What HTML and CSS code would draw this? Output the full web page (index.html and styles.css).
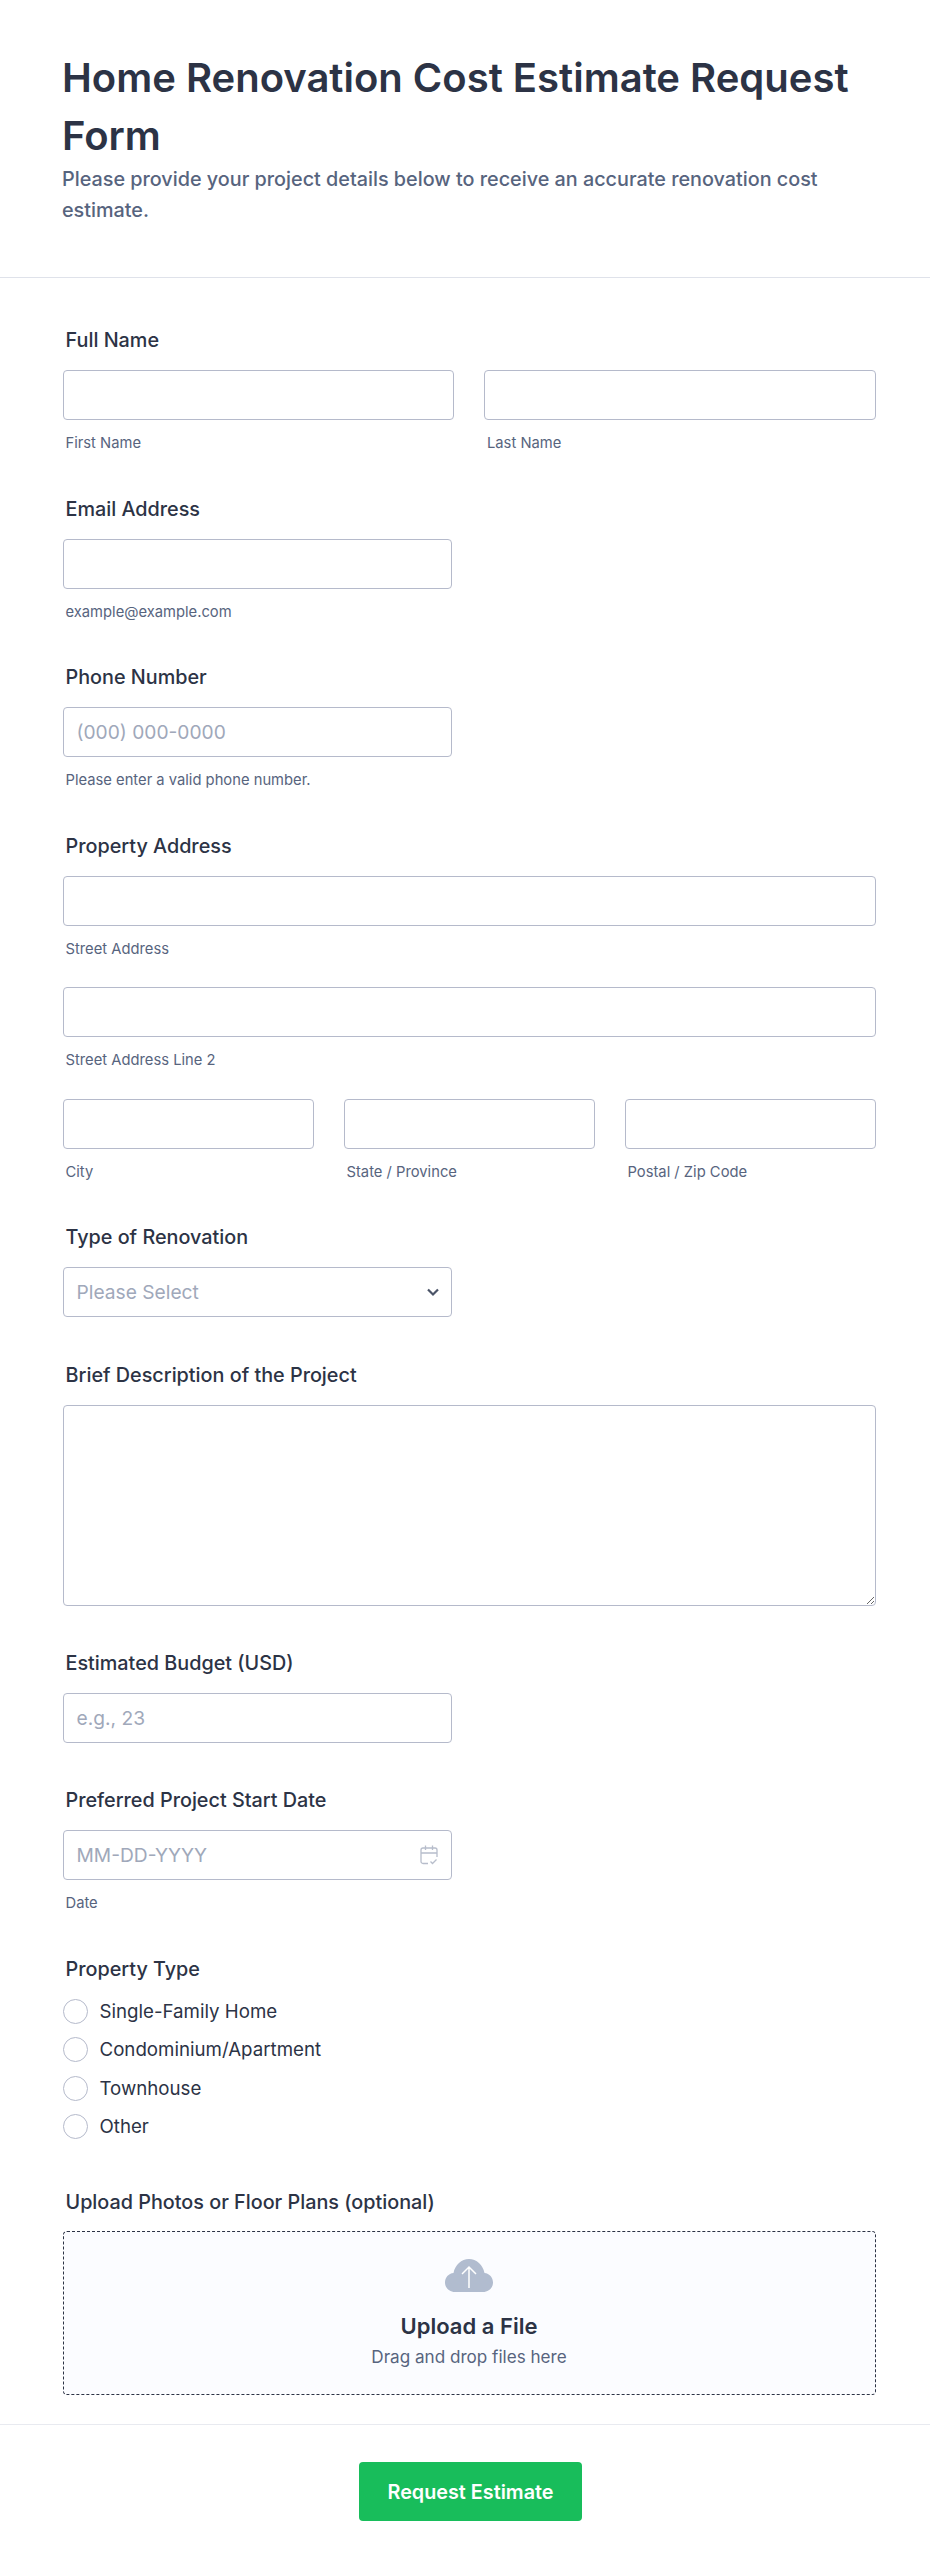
FILE: index.html
```html
<!DOCTYPE html>
<html>
<head>
    <title>Home Renovation Cost Estimate Request Form</title>
    <link rel="stylesheet" href="styles.css">
</head>
<body>
    <div class="form-header">
        <h1>Home Renovation Cost Estimate Request Form</h1>
        <p>Please provide your project details below to receive an accurate renovation cost estimate.</p>
    </div>

    <form class="form-body">
        <div class="field">
            <label class="field-label">Full Name</label>
            <div class="row row-2">
                <div>
                    <input type="text" class="text-input">
                    <span class="sub-label">First Name</span>
                </div>
                <div>
                    <input type="text" class="text-input">
                    <span class="sub-label">Last Name</span>
                </div>
            </div>
        </div>

        <div class="field field-half">
            <label class="field-label">Email Address</label>
            <input type="text" class="text-input">
            <span class="sub-label">example@example.com</span>
        </div>

        <div class="field field-half">
            <label class="field-label">Phone Number</label>
            <input type="text" class="text-input" placeholder="(000) 000-0000">
            <span class="sub-label">Please enter a valid phone number.</span>
        </div>

        <div class="field">
            <label class="field-label">Property Address</label>
            <div class="address-line">
                <input type="text" class="text-input">
                <span class="sub-label">Street Address</span>
            </div>
            <div class="address-line">
                <input type="text" class="text-input">
                <span class="sub-label">Street Address Line 2</span>
            </div>
            <div class="row row-3">
                <div>
                    <input type="text" class="text-input">
                    <span class="sub-label">City</span>
                </div>
                <div>
                    <input type="text" class="text-input">
                    <span class="sub-label">State / Province</span>
                </div>
                <div>
                    <input type="text" class="text-input">
                    <span class="sub-label">Postal / Zip Code</span>
                </div>
            </div>
        </div>

        <div class="field field-half">
            <label class="field-label">Type of Renovation</label>
            <div class="input-wrap">
                <select class="text-input select-input">
                    <option>Please Select</option>
                </select>
                <svg class="input-icon chevron" width="14" height="10" viewBox="0 0 14 10"><path d="M2 2.500l5 5 5-5" fill="none" stroke="#4b5468" stroke-width="2.200"/></svg>
            </div>
        </div>

        <div class="field">
            <label class="field-label">Brief Description of the Project</label>
            <textarea class="text-input text-area"></textarea>
        </div>

        <div class="field field-half field-tight">
            <label class="field-label">Estimated Budget (USD)</label>
            <input type="text" class="text-input" placeholder="e.g., 23">
        </div>

        <div class="field field-half field-tight">
            <label class="field-label">Preferred Project Start Date</label>
            <div class="input-wrap">
                <input type="text" class="text-input" placeholder="MM-DD-YYYY">
                <svg class="input-icon calendar" width="18" height="20" viewBox="0 0 18 20" fill="none" stroke="#b7bdcb" stroke-width="1.300"><path d="M8 18.500H3a2 2 0 0 1-2-2V5a2 2 0 0 1 2-2h12a2 2 0 0 1 2 2v7"/><path d="M1 8h16M5.500 .5v4.500M12.500 .5v4.500M10.500 16.500l2 2 4-4"/></svg>
            </div>
            <span class="sub-label">Date</span>
        </div>

        <div class="field">
            <label class="field-label">Property Type</label>
            <div class="radio-list">
                <label class="radio-item"><input type="radio" name="ptype"> Single-Family Home</label>
                <label class="radio-item"><input type="radio" name="ptype"> Condominium/Apartment</label>
                <label class="radio-item"><input type="radio" name="ptype"> Townhouse</label>
                <label class="radio-item"><input type="radio" name="ptype"> Other</label>
            </div>
        </div>

        <div class="field field-upload">
            <label class="field-label">Upload Photos or Floor Plans (optional)</label>
            <div class="upload-box">
                <svg class="cloud" width="48" height="33" viewBox="0 0 48 33"><path d="M10 33C4.500 33 0 29 0 23.500 0 18.500 3.500 14.500 8.500 14 10 6 16.500 0 24 0s14 6 15.500 14C44.500 14.500 48 18.500 48 23.500 48 29 43.500 33 38 33z" fill="#b1bccf"/><path d="M24 29V8.500M17 15l7-7 7 7" fill="none" stroke="#fff" stroke-width="1.500"/></svg>
                <div class="upload-title">Upload a File</div>
                <div class="upload-hint">Drag and drop files here</div>
            </div>
        </div>
    </form>

    <div class="form-footer">
        <button type="button" class="submit-btn">Request Estimate</button>
    </div>
</body>
</html>
```

FILE: styles.css
```css
* {
    box-sizing: border-box;
}
body {
    font-family: Inter, "Liberation Sans", sans-serif;
    background-color: #fff;
    color: #2c3345;
    margin: 0;
    padding: 0;
}
.form-header {
    height: 278px;
    padding: 49px 54px 0 62px;
    border-bottom: 1px solid #dfe2ea;
}
.form-header h1 {
    font-size: 40px;
    font-weight: 600;
    line-height: 57.500px;
    margin: 0;
}
.form-header p {
    font-size: 19.800px;
    font-weight: 500;
    line-height: 31px;
    color: #57647e;
    margin: 0;
}
.form-body {
    padding: 52px 54.500px 0 62.500px;
}
.field {
    margin-bottom: 47.500px;
}
.field-half {
    width: 389px;
}
.field-label {
    display: block;
    font-size: 19.800px;
    font-weight: 500;
    line-height: 21px;
    margin: 0 0 19px 3px;
}
.field-tight .field-label {
    margin-bottom: 18.800px;
}
.field-upload {
    margin-top: 53.400px;
    margin-bottom: 0;
}
.field-upload .field-label {
    margin-bottom: 17.500px;
}
.row {
    display: grid;
}
.row-2 {
    grid-template-columns: 1fr 1fr;
    column-gap: 30px;
}
.row-3 {
    grid-template-columns: 1fr 1fr 1fr;
    column-gap: 30px;
}
.address-line {
    margin-bottom: 30.500px;
}
.text-input {
    display: block;
    width: 100%;
    height: 50px;
    padding: 0 13px;
    font-family: inherit;
    font-size: 19.200px;
    color: #2c3345;
    background: #fff;
    border: 1px solid #b5bacb;
    border-radius: 4px;
    outline: none;
}
.text-input::placeholder {
    color: #a0a8ba;
    opacity: 1;
}
.sub-label {
    display: block;
    font-size: 14.750px;
    line-height: 16px;
    color: #57647e;
    margin: 15px 0 0 3px;
}
.input-wrap {
    position: relative;
}
.select-input {
    appearance: none;
    color: #a0a8ba;
}
.input-icon {
    position: absolute;
    top: 50%;
    transform: translateY(-50%);
}
.chevron {
    right: 12px;
}
.calendar {
    right: 14px;
}
.text-area {
    height: 201px;
    padding: 10px 13px;
}
.radio-list {
    display: flex;
    flex-direction: column;
    gap: 13.500px;
}
.radio-item {
    display: flex;
    align-items: center;
    gap: 12px;
    font-size: 18.700px;
    line-height: 25px;
}
.radio-item input {
    appearance: none;
    width: 25px;
    height: 25px;
    margin: 0;
    background: #fff;
    border: 1px solid #b5bacb;
    border-radius: 50%;
}
.upload-box {
    display: flex;
    flex-direction: column;
    align-items: center;
    height: 164px;
    padding-top: 27px;
    background-color: #fbfcff;
    border: 1px dashed #2c3345;
    border-radius: 4px;
}
.cloud {
    display: block;
}
.upload-title {
    font-size: 22px;
    font-weight: 600;
    line-height: 24px;
    margin-top: 22.500px;
}
.upload-hint {
    font-size: 17.100px;
    line-height: 20px;
    color: #57647e;
    margin-top: 9px;
}
.form-footer {
    display: flex;
    justify-content: center;
    margin-top: 29.500px;
    padding: 37px 0 0 11px;
    border-top: 1px solid #e8eaf0;
}
.submit-btn {
    width: 223px;
    height: 59px;
    font-family: inherit;
    font-size: 19.800px;
    font-weight: 600;
    color: #fff;
    background-color: #18bd5b;
    border: none;
    border-radius: 4px;
    cursor: pointer;
}
```
